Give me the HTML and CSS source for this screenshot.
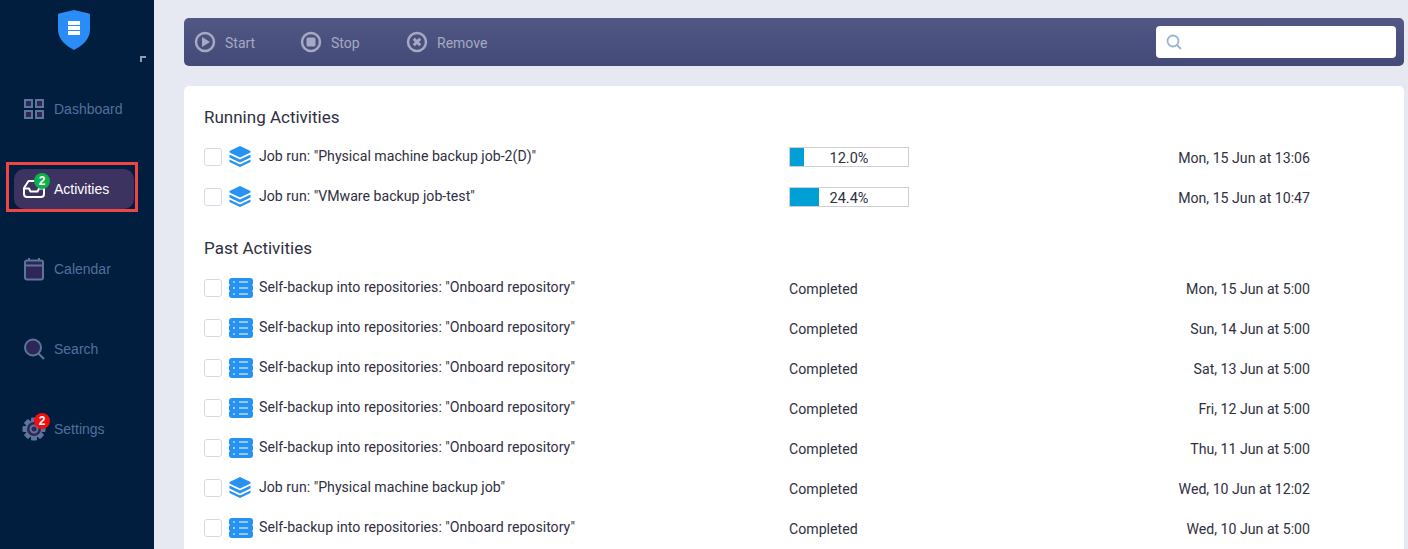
FILE: index.html
```html
<!DOCTYPE html>
<html lang="en">
<head>
    <meta charset="UTF-8">
    <meta name="viewport" content="width=device-width, initial-scale=1.0">
    <title>Activities</title>
    <link rel="stylesheet" href="styles.css">
</head>
<body>
    <svg width="0" height="0" class="defs">
        <symbol id="layers" viewBox="0 0 24 22">
            <path d="M11 0 L21.5 5 V6.5 L11 11.5 L0.5 6.5 V5 Z" fill="#2692f2"/>
            <path d="M0.5 8.5 L11 13.5 L21.5 8.5 V11.5 L11 16.5 L0.5 11.5 Z" fill="#2692f2"/>
            <path d="M0.5 13.5 L11 18.5 L21.5 13.5 V16 L11 21 L0.5 16 Z" fill="#2692f2"/>
        </symbol>
        <symbol id="repo" viewBox="0 0 24 22">
            <rect y="1" width="24" height="20" rx="3" fill="#2692f2"/>
            <path d="M4 5h2M4 11h2M4 17h2M10 5h9M10 11h9M10 17h9" stroke="#fff" stroke-width="1"/>
            <path d="M0 8h1M0 14h1M23 8h1M23 14h1" stroke="#fff" stroke-width="1"/>
        </symbol>
    </svg>

    <aside class="sidebar">
        <div class="logo">
            <svg width="32" height="40" viewBox="0 0 32 40">
                <path d="M16 0 L31 3.5 Q32 3.8 32 5 V20 C32 29 24 36 16 40 C8 36 0 29 0 20 V5 Q0 3.8 1 3.5 Z" fill="#2a8cf7"/>
                <path d="M10 11h12v4H10zM10 16h12v4H10zM10 21h12v4H10z" fill="#fff"/>
            </svg>
        </div>
        <span class="corner"></span>
        <nav class="nav">
            <a class="nav-item">
                <svg width="24" height="22" viewBox="0 0 24 22" class="nav-icon">
                    <path d="M3 2h7v7H3zM14 2h7v7h-7zM3 13h7v7H3zM14 13h7v7h-7z" fill="#2e2558" stroke="#5d7599" stroke-width="2"/>
                </svg>
                Dashboard
            </a>
            <a class="nav-item active">
                <svg width="24" height="20" viewBox="0 0 24 20" class="nav-icon">
                    <path d="M6.5 2 H17.5 L22 9 V15 Q22 18 19 18 H5 Q2 18 2 15 V9 Z M2 9.5 H7 L8.5 12.5 H15.5 L17 9.5 H22" fill="none" stroke="#fff" stroke-width="2" stroke-linejoin="round"/>
                </svg>
                <span class="badge green">2</span>
                Activities
            </a>
            <a class="nav-item">
                <svg width="24" height="24" viewBox="0 0 24 24" class="nav-icon">
                    <path d="M7 1v4M17 1v4" stroke="#5d7599" stroke-width="2"/>
                    <rect x="3" y="3.5" width="18" height="19" rx="2" fill="#2e2558" stroke="#5d7599" stroke-width="2"/>
                    <path d="M3 8.5h18" stroke="#5d7599" stroke-width="2"/>
                </svg>
                Calendar
            </a>
            <a class="nav-item">
                <svg width="24" height="22" viewBox="0 0 24 22" class="nav-icon">
                    <circle cx="11" cy="9.5" r="8" fill="#2e2558" stroke="#5d7599" stroke-width="2"/>
                    <path d="M16.5 15.5 L22 21" stroke="#5d7599" stroke-width="2"/>
                </svg>
                Search
            </a>
            <a class="nav-item">
                <svg width="24" height="24" viewBox="0 0 24 24" class="nav-icon">
                    <g fill="#5d7599">
                        <rect x="9" y="0.5" width="6" height="23" rx="1"/>
                        <rect x="9" y="0.5" width="6" height="23" rx="1" transform="rotate(45 12 12)"/>
                        <rect x="9" y="0.5" width="6" height="23" rx="1" transform="rotate(90 12 12)"/>
                        <rect x="9" y="0.5" width="6" height="23" rx="1" transform="rotate(135 12 12)"/>
                        <circle cx="12" cy="12" r="8.5"/>
                    </g>
                    <circle cx="12" cy="12" r="7" fill="#2e2558"/>
                    <circle cx="12" cy="12" r="3.5" fill="none" stroke="#5d7599" stroke-width="2"/>
                </svg>
                <span class="badge red">2</span>
                Settings
            </a>
        </nav>
    </aside>

    <main class="main">
        <div class="toolbar">
            <button class="tool">
                <svg width="22" height="22" viewBox="0 0 22 22"><circle cx="11" cy="11" r="9" fill="none" stroke="#a5a9c3" stroke-width="2.5"/><path d="M8 6 L16 11 L8 16 Z" fill="#a5a9c3"/></svg>
                <span>Start</span>
            </button>
            <button class="tool">
                <svg width="22" height="22" viewBox="0 0 22 22"><circle cx="11" cy="11" r="9" fill="none" stroke="#a5a9c3" stroke-width="2.5"/><rect x="6.5" y="6.5" width="9" height="9" rx="1.5" fill="#a5a9c3"/></svg>
                <span>Stop</span>
            </button>
            <button class="tool">
                <svg width="22" height="22" viewBox="0 0 22 22"><circle cx="11" cy="11" r="9" fill="none" stroke="#a5a9c3" stroke-width="2.5"/><path d="M7.8 7.8 L14.2 14.2 M14.2 7.8 L7.8 14.2" stroke="#a5a9c3" stroke-width="3"/></svg>
                <span>Remove</span>
            </button>
            <div class="search">
                <svg width="16" height="16" viewBox="0 0 16 16"><circle cx="7" cy="7" r="5.5" fill="none" stroke="#9ab3cf" stroke-width="1.8"/><path d="M11 11 L15 15" stroke="#9ab3cf" stroke-width="1.8"/></svg>
            </div>
        </div>

        <section class="card">
            <h3>Running Activities</h3>
            <div class="row">
                <span class="check"></span>
                <svg class="type-icon" width="24" height="22"><use href="#layers"/></svg>
                <span class="name">Job run: "Physical machine backup job-2(D)"</span>
                <span class="status progress"><span class="bar"><span class="fill" style="width:12%"></span><span class="pct">12.0%</span></span></span>
                <span class="date">Mon, 15 Jun at 13:06</span>
            </div>
            <div class="row">
                <span class="check"></span>
                <svg class="type-icon" width="24" height="22"><use href="#layers"/></svg>
                <span class="name">Job run: "VMware backup job-test"</span>
                <span class="status progress"><span class="bar"><span class="fill" style="width:24.4%"></span><span class="pct">24.4%</span></span></span>
                <span class="date">Mon, 15 Jun at 10:47</span>
            </div>

            <h3 class="past">Past Activities</h3>
            <div class="row">
                <span class="check"></span>
                <svg class="type-icon" width="24" height="22"><use href="#repo"/></svg>
                <span class="name">Self-backup into repositories: "Onboard repository"</span>
                <span class="status">Completed</span>
                <span class="date">Mon, 15 Jun at 5:00</span>
            </div>
            <div class="row">
                <span class="check"></span>
                <svg class="type-icon" width="24" height="22"><use href="#repo"/></svg>
                <span class="name">Self-backup into repositories: "Onboard repository"</span>
                <span class="status">Completed</span>
                <span class="date">Sun, 14 Jun at 5:00</span>
            </div>
            <div class="row">
                <span class="check"></span>
                <svg class="type-icon" width="24" height="22"><use href="#repo"/></svg>
                <span class="name">Self-backup into repositories: "Onboard repository"</span>
                <span class="status">Completed</span>
                <span class="date">Sat, 13 Jun at 5:00</span>
            </div>
            <div class="row">
                <span class="check"></span>
                <svg class="type-icon" width="24" height="22"><use href="#repo"/></svg>
                <span class="name">Self-backup into repositories: "Onboard repository"</span>
                <span class="status">Completed</span>
                <span class="date">Fri, 12 Jun at 5:00</span>
            </div>
            <div class="row">
                <span class="check"></span>
                <svg class="type-icon" width="24" height="22"><use href="#repo"/></svg>
                <span class="name">Self-backup into repositories: "Onboard repository"</span>
                <span class="status">Completed</span>
                <span class="date">Thu, 11 Jun at 5:00</span>
            </div>
            <div class="row">
                <span class="check"></span>
                <svg class="type-icon" width="24" height="22"><use href="#layers"/></svg>
                <span class="name">Job run: "Physical machine backup job"</span>
                <span class="status">Completed</span>
                <span class="date">Wed, 10 Jun at 12:02</span>
            </div>
            <div class="row">
                <span class="check"></span>
                <svg class="type-icon" width="24" height="22"><use href="#repo"/></svg>
                <span class="name">Self-backup into repositories: "Onboard repository"</span>
                <span class="status">Completed</span>
                <span class="date">Wed, 10 Jun at 5:00</span>
            </div>
        </section>
    </main>
</body>
</html>
```

FILE: styles.css
```css
* {
    box-sizing: border-box;
}
html, body {
    height: 100%;
}
body {
    margin: 0;
    display: flex;
    overflow: hidden;
    background: #e6e9f2;
    font-family: Roboto, "Noto Sans", Arial, sans-serif;
    font-size: 14.15px;
    color: #2f2f3f;
}
.defs {
    position: absolute;
}

/* sidebar */
.sidebar {
    position: relative;
    flex: 0 0 154px;
    background: #011e3f;
    font-family: "Liberation Sans", Arial, sans-serif;
}
.logo {
    display: flex;
    justify-content: center;
    padding: 10px 0 0 0;
    margin-right: 6px;
    height: 69px;
}
.corner {
    position: absolute;
    left: 140px;
    top: 56px;
    width: 6px;
    height: 6px;
    border-top: 2px solid #8f9db3;
    border-left: 2px solid #8f9db3;
}
.nav {
    display: flex;
    flex-direction: column;
    gap: 40px;
    padding: 20px 20px 0 14px;
}
.nav-item {
    position: relative;
    display: flex;
    align-items: center;
    gap: 8px;
    width: 120px;
    height: 40px;
    padding-left: 8px;
    border-radius: 10px;
    color: #51709c;
    font-size: 14px;
}
.nav-item.active {
    background: #3d3360;
    color: #fff;
}
.nav-item.active::after {
    content: "";
    position: absolute;
    left: -8px;
    top: -7px;
    width: 132px;
    height: 50px;
    box-sizing: border-box;
    border: 3px solid #f04545;
}
.nav-icon {
    flex: none;
}
.badge {
    position: absolute;
    left: 20px;
    top: 4px;
    width: 16px;
    height: 16px;
    border-radius: 50%;
    color: #fff;
    font-size: 12px;
    font-weight: bold;
    line-height: 16px;
    text-align: center;
}
.badge.green {
    background: #0db14b;
}
.badge.red {
    background: #f01010;
}

/* main */
.main {
    flex: 1;
    display: flex;
    flex-direction: column;
    height: 100%;
    padding: 18px 4px 0 30px;
    min-width: 0;
}
.toolbar {
    flex: none;
    display: flex;
    align-items: center;
    height: 48px;
    padding: 0 8px 0 10px;
    border-radius: 5px;
    background: linear-gradient(#525784, #434a78);
}
.tool {
    display: flex;
    align-items: center;
    gap: 9px;
    width: 106px;
    padding: 0;
    border: none;
    background: none;
    color: #a5a9c3;
    font: inherit;
    font-size: 14px;
}
.tool span {
    margin-top: 2px;
}
.search {
    display: flex;
    align-items: center;
    width: 240px;
    height: 32px;
    margin-left: auto;
    padding-left: 10px;
    border-radius: 4px;
    background: #fff;
}
.card {
    flex: 1;
    min-height: 0;
    overflow: hidden;
    margin-top: 20px;
    padding: 20px 20px 0;
    border-radius: 5px 5px 0 0;
    background: #fff;
}
h3 {
    margin: 0 0 9px 0;
    height: 22px;
    font-size: 17px;
    font-weight: normal;
    line-height: 22px;
}
h3.past {
    margin-top: 20px;
}
.row {
    display: flex;
    align-items: center;
    height: 40px;
}
.check {
    flex: none;
    width: 18px;
    height: 18px;
    border: 1px solid #d5dbe6;
    border-radius: 3px;
}
.type-icon {
    flex: none;
    margin-left: 7px;
}
.name {
    flex: none;
    width: 530px;
    margin-left: 6px;
    margin-top: -2px;
}
.status {
    flex: none;
    width: 360px;
    margin-top: 2px;
}
.status.progress {
    margin-top: 0;
}
.bar {
    position: relative;
    display: block;
    width: 120px;
    height: 20px;
    border: 1px solid #cfcfcf;
    text-align: center;
    font-size: 14.5px;
    line-height: 21px;
}
.fill {
    position: absolute;
    left: 0;
    top: 0;
    height: 100%;
    background: #009fd6;
}
.pct {
    position: relative;
}
.date {
    flex: none;
    width: 161px;
    margin-top: 2px;
    text-align: right;
}
```
